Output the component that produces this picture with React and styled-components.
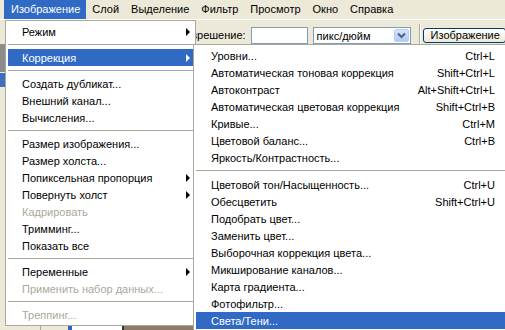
import React from 'react';
import styled, { createGlobalStyle } from 'styled-components';

const GlobalStyle = createGlobalStyle`
  html, body {
    margin: 0;
    padding: 0;
    background: #ece9d8;
  }
`;

const Screen = styled.div`
  position: relative;
  width: 505px;
  height: 330px;
  overflow: hidden;
  display: flex;
  flex-direction: column;
  background: #ece9d8;
  font-family: "Liberation Sans", Arial, sans-serif;
  font-size: 11px;
  color: #000;
`;

const MenuBar = styled.div`
  display: flex;
  height: 20px;
  padding-left: 4px;
`;

const MenuTitle = styled.div`
  height: 19px;
  line-height: 19px;
  padding: 0 6px 0 ${p => p.$pl || 6}px;
  white-space: nowrap;
  color: ${p => (p.$active ? '#fff' : '#000')};
  background: ${p => (p.$active ? '#316ac5' : 'transparent')};
`;

// left part of the options bar is hidden behind the open menu
const OptionsBar = styled.div`
  display: flex;
  align-items: flex-start;
  height: 27px;
  box-sizing: border-box;
  padding: 7px 0 0 179px;
  gap: 5px;
  border-top: 1px solid #fff;
  & > * {
    flex-shrink: 0;
  }
`;

const OptLabel = styled.span`
  line-height: 17px;
  white-space: nowrap;
`;

const Field = styled.div`
  width: ${p => p.$w}px;
  height: 17px;
  box-sizing: border-box;
  background: #fff;
  border: 1px solid #7f9db9;
`;

const Select = styled(Field)`
  display: flex;
  align-items: center;
  justify-content: space-between;
  padding: 0 1px 0 3px;
  white-space: nowrap;
`;

const DropBtn = styled.div`
  width: 15px;
  height: 13px;
  display: flex;
  align-items: center;
  justify-content: center;
  border-radius: 2px;
  background: linear-gradient(#d6e4fd, #b2c9f5);
  border: 1px solid #bccff2;
  box-sizing: border-box;
`;

const VDivider = styled.div`
  width: 1px;
  height: 20px;
  margin: -3px -2px 0 3px;
  background: #aca899;
  box-shadow: 1px 0 0 #fff;
`;

const PushButton = styled.div`
  height: 15px;
  line-height: 13px;
  margin-top: 1px;
  padding: 0 5px 0 7px;
  box-sizing: border-box;
  border: 1px solid #003c74;
  border-radius: 3px;
  background: linear-gradient(#ffffff, #ece9d8);
  white-space: nowrap;
`;

const Workspace = styled.div`
  flex: 1;
  display: flex;
  align-items: flex-start;
`;

const Toolbox = styled.div`
  width: 40px;
  display: flex;
  flex-direction: column;
  border-right: 1px solid #aca899;
  align-self: stretch;
`;

const ToolHead = styled.div`
  height: 28px;
  background: #8c8c8c;
`;

const ToolIcon = styled.div`
  height: 14px;
  margin-top: 1px;
  background: #3d6fc1;
`;

const DocWindow = styled.div`
  margin: 277px 0 0 27px;
  width: 200px;
  height: 20px;
  display: flex;
  border-top: 1px solid #5a4a3a;
  background: #fff;
`;

const DocEdge = styled.div`
  width: 4px;
  background: #2f63c4;
`;

const DocPhoto = styled.div`
  margin-left: 50px;
  flex: 1;
  border-left: 2px solid #333;
  background: #8d7b6a;
`;

const DropMenu = styled.div`
  position: absolute;
  left: ${p => p.$x}px;
  top: ${p => p.$y}px;
  width: ${p => p.$w}px;
  box-sizing: border-box;
  padding: 2px;
  display: flex;
  flex-direction: column;
  background: #fff;
  border: 1px solid #aca899;
`;

const Item = styled.div`
  display: flex;
  align-items: center;
  height: 17px;
  padding: 0 ${p => p.$pr}px 0 ${p => p.$pl}px;
  white-space: nowrap;
  color: ${p => (p.$active ? '#fff' : p.$disabled ? '#aca899' : '#000')};
  background: ${p => (p.$active ? '#316ac5' : 'transparent')};
`;

const ItemLabel = styled.span`
  flex: 1;
`;

const Arrow = styled.span`
  width: 0;
  height: 0;
  border-left: 4px solid currentColor;
  border-top: 4px solid transparent;
  border-bottom: 4px solid transparent;
`;

const Separator = styled.div`
  height: 1px;
  margin: 4px 0 ${p => p.$mb}px;
  background: #aca899;
`;

const imageMenu = [
  { label: 'Режим', sub: true },
  '-',
  { label: 'Коррекция', sub: true, active: true },
  '-',
  { label: 'Создать дубликат...' },
  { label: 'Внешний канал...' },
  { label: 'Вычисления...' },
  '-',
  { label: 'Размер изображения...' },
  { label: 'Размер холста...' },
  { label: 'Попиксельная пропорция', sub: true },
  { label: 'Повернуть холст', sub: true },
  { label: 'Кадрировать', disabled: true },
  { label: 'Тримминг...' },
  { label: 'Показать все' },
  '-',
  { label: 'Переменные', sub: true },
  { label: 'Применить набор данных...', disabled: true },
  '-',
  { label: 'Треппинг...', disabled: true },
];

const adjustMenu = [
  { label: 'Уровни...', key: 'Ctrl+L' },
  { label: 'Автоматическая тоновая коррекция', key: 'Shift+Ctrl+L' },
  { label: 'Автоконтраст', key: 'Alt+Shift+Ctrl+L' },
  { label: 'Автоматическая цветовая коррекция', key: 'Shift+Ctrl+B' },
  { label: 'Кривые...', key: 'Ctrl+M' },
  { label: 'Цветовой баланс...', key: 'Ctrl+B' },
  { label: 'Яркость/Контрастность...' },
  '-',
  { label: 'Цветовой тон/Насыщенность...', key: 'Ctrl+U' },
  { label: 'Обесцветить', key: 'Shift+Ctrl+U' },
  { label: 'Подобрать цвет...' },
  { label: 'Заменить цвет...' },
  { label: 'Выборочная коррекция цвета...' },
  { label: 'Микширование каналов...' },
  { label: 'Карта градиента...' },
  { label: 'Фотофильтр...' },
  { label: 'Света/Тени...', active: true },
];

const Menu = ({ items, x, y, w, pl, pr, sepGap }) => (
  <DropMenu $x={x} $y={y} $w={w}>
    {items.map((it, i) =>
      it === '-' ? (
        <Separator key={i} $mb={sepGap} />
      ) : (
        <Item key={i} $pl={pl} $pr={pr} $active={it.active} $disabled={it.disabled}>
          <ItemLabel>{it.label}</ItemLabel>
          {it.key && <span>{it.key}</span>}
          {it.sub && <Arrow />}
        </Item>
      )
    )}
  </DropMenu>
);

const Chevron = () => (
  <svg width="9" height="7" viewBox="0 0 9 7">
    <path d="M1 1.5 L4.5 5 L8 1.5" fill="none" stroke="#4d6185" strokeWidth="2" />
  </svg>
);

const titles = ['Изображение', 'Слой', 'Выделение', 'Фильтр', 'Просмотр', 'Окно', 'Справка'];

const App = () => (
  <Screen>
    <GlobalStyle />
    <MenuBar>
      {titles.map((t, i) => (
        <MenuTitle key={t} $active={i === 0} $pl={i === 0 ? 7 : 6}>
          {t}
        </MenuTitle>
      ))}
    </MenuBar>
    <OptionsBar>
      <OptLabel>Разрешение:</OptLabel>
      <Field $w={57} />
      <Select $w={98}>
        <span>пикс/дюйм</span>
        <DropBtn>
          <Chevron />
        </DropBtn>
      </Select>
      <VDivider />
      <PushButton>Изображение</PushButton>
    </OptionsBar>
    <Workspace>
      <Toolbox>
        <ToolHead />
        <ToolIcon />
      </Toolbox>
      <DocWindow>
        <DocEdge />
        <DocPhoto />
      </DocWindow>
    </Workspace>
    <Menu items={imageMenu} x={5} y={20} w={191} pl={14} pr={3} sepGap={4} />
    <Menu items={adjustMenu} x={193} y={44} w={316} pl={15} pr={11} sepGap={5} />
  </Screen>
);

export default App;
